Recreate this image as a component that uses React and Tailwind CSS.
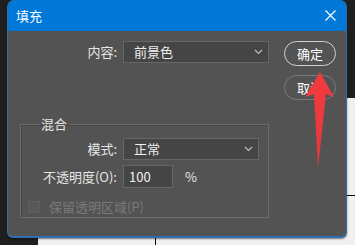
import React from "react"

const font = { fontFamily: '"Noto Sans CJK SC", "Noto Sans", sans-serif' }

function Chevron() {
    return (
        <svg width="9" height="6" viewBox="0 0 9 6" className="shrink-0">
            <path d="M1 1l3.5 3.5L8 1" fill="none" stroke="#bdbdbd" strokeWidth="1.2" />
        </svg>
    )
}

function Select({ value, width }) {
    return (
        <div
            className={`flex h-[22px] items-center justify-between border border-[#666] bg-[#454545] pl-[10px] pr-[5px] text-[13px] text-[#f0f0f0] ${width}`}
        >
            <span>{value}</span>
            <Chevron />
        </div>
    )
}

export default function App() {
    return (
        <div className="relative h-[245px] w-[355px] overflow-hidden bg-[#1f1f1f]" style={font}>
            {/* stuff behind the dialog */}
            <div className="absolute left-[38px] top-[236px] h-[10px] w-[320px] bg-[#f0f0f0]" />
            <div className="absolute left-[155px] top-[236px] h-[10px] w-px bg-black" />
            <div className="absolute left-[346px] top-[98px] h-[150px] w-[10px] bg-[#f0f0f0]" />
            <div className="absolute left-[346px] top-[195px] h-px w-[10px] bg-black" />

            <div className="relative ml-[7px] flex h-[238px] w-[340px] flex-col overflow-hidden rounded-t-[7px] rounded-b-[6px] border-x border-b-2 border-[#2f6fad] bg-[#535353] shadow-[0_1px_2px_rgba(0,0,0,0.5)]">
                <div className="flex h-[31px] shrink-0 items-center justify-between bg-[#0078d7] pl-[8px] pr-[10px] text-[13px] text-white">
                    <span>填充</span>
                    <svg width="11" height="11" viewBox="0 0 11 11">
                        <path d="M0.5 0.5l10 10M10.5 0.5l-10 10" stroke="white" strokeWidth="1.2" />
                    </svg>
                </div>

                <div className="flex flex-1 pt-[10px]">
                    <div className="flex w-[276px] flex-col">
                        <div className="flex items-center">
                            <div className="w-[109px] text-right text-[13px] text-[#e6e6e6]">内容:</div>
                            <div className="ml-[6px]">
                                <Select value="前景色" width="w-[146px]" />
                            </div>
                        </div>

                        <fieldset className="ml-[12px] mt-[54px] h-[101px] w-[249px] border border-[#6b6b6b] shadow-[inset_1px_1px_0_#474747]">
                            <legend className="ml-[18px] px-[2px] text-[13px] leading-[14px] text-[#e6e6e6]">混合</legend>
                            <div className="mt-[7px] flex items-center">
                                <div className="w-[96px] text-right text-[13px] text-[#e6e6e6]">模式:</div>
                                <div className="ml-[6px]">
                                    <Select value="正常" width="w-[136px]" />
                                </div>
                            </div>
                            <div className="mt-[5px] flex items-center">
                                <div className="w-[96px] text-right text-[13px] text-[#e6e6e6]">不透明度(O):</div>
                                <div className="ml-[6px] flex h-[23px] w-[50px] items-center border border-[#666] bg-[#454545] pl-[5px] text-[13px] text-[#f0f0f0]">
                                    100
                                </div>
                                <span className="ml-[12px] text-[13px] text-[#e6e6e6]">%</span>
                            </div>
                            <div className="mt-[9px] flex items-center pl-[7px]">
                                <div className="h-[12px] w-[12px] border border-[#5e5e5e] bg-[#585858]" />
                                <span className="ml-[9px] text-[13px] text-[#7a7a7a]">保留透明区域(P)</span>
                            </div>
                        </fieldset>
                    </div>

                    <div className="flex flex-col gap-[9px]">
                        <div className="flex h-[25px] w-[52px] items-center justify-center rounded-full border-[1.5px] border-[#cfcfcf] text-[13px] text-white">
                            确定
                        </div>
                        <div className="flex h-[25px] w-[52px] items-center justify-center rounded-full border-[1.5px] border-[#7a7a7a] text-[13px] text-white">
                            取消
                        </div>
                    </div>
                </div>
            </div>

            {/* red annotation arrow */}
            <svg className="absolute left-0 top-0" width="355" height="245" viewBox="0 0 355 245">
                <defs>
                    <linearGradient id="arr" x1="0" y1="0" x2="0" y2="1">
                        <stop offset="0" stopColor="#f23b3f" />
                        <stop offset="1" stopColor="#e8363a" />
                    </linearGradient>
                </defs>
                <polygon points="320,72 334,97 326,94 318,168 314,94 305,97" fill="url(#arr)" />
            </svg>
        </div>
    )
}
